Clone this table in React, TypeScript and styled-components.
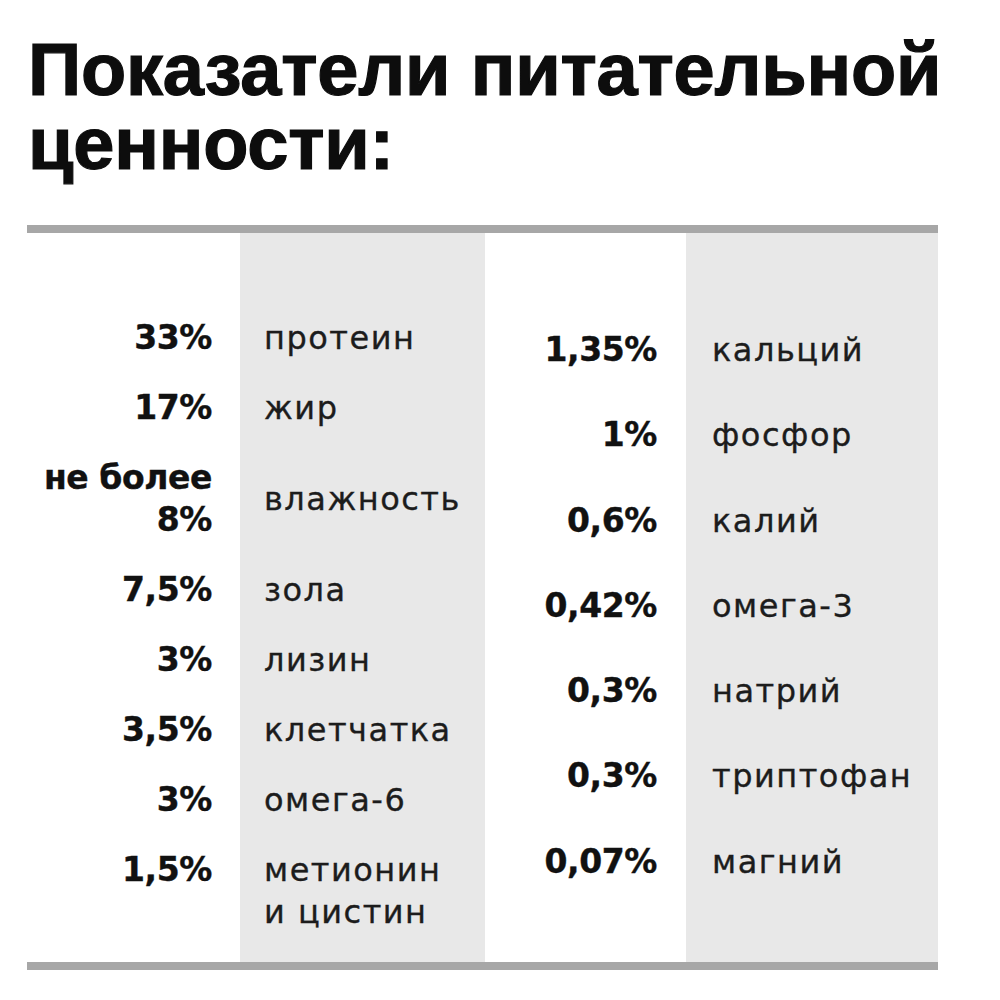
import React from "react";
import styled, { createGlobalStyle } from "styled-components";

const GlobalStyle = createGlobalStyle`
  html, body {
    margin: 0;
    padding: 0;
    background: #ffffff;
  }
`;

const Page = styled.main`
  width: 1000px;
  height: 1000px;
  box-sizing: border-box;
  padding: 33px 0 0 27px;
  background: #ffffff;
`;

const Title = styled.h1`
  margin: 0 0 44px 1px;
  white-space: nowrap;
  font-family: "Liberation Sans", Arial, sans-serif;
  font-weight: 700;
  font-size: 74px;
  line-height: 74px;
  letter-spacing: -0.2px;
  color: #0d0d0d;
  -webkit-text-stroke: 1.2px #0d0d0d;
`;

const Table = styled.section`
  display: flex;
  width: 911px;
  border-top: 8px solid #a7a7a7;
  border-bottom: 8px solid #a7a7a7;
`;

const Half = styled.div<{ $valueW: number; $nameW: number; $padTop: number; $gap: number }>`
  display: grid;
  grid-template-columns: ${(p) => p.$valueW}px ${(p) => p.$nameW}px;
  grid-auto-rows: auto;
  align-content: start;
  row-gap: ${(p) => p.$gap}px;
  padding: ${(p) => p.$padTop}px 0 29px;
  background: linear-gradient(
    to right,
    #ffffff ${(p) => p.$valueW}px,
    #e8e8e8 ${(p) => p.$valueW}px
  );
`;

const Value = styled.div<{ $pad: number }>`
  padding-right: ${(p) => p.$pad}px;
  text-align: right;
  white-space: nowrap;
  font-family: "DejaVu Sans", Verdana, sans-serif;
  font-weight: 700;
  font-size: 33px;
  line-height: 42px;
  letter-spacing: -0.4px;
  color: #111111;
  -webkit-text-stroke: 0.4px #111111;
`;

const Name = styled.div<{ $pad: number; $center?: boolean }>`
  padding-left: ${(p) => p.$pad}px;
  align-self: ${(p) => (p.$center ? "center" : "start")};
  white-space: nowrap;
  font-family: "DejaVu Sans", Verdana, sans-serif;
  font-weight: 400;
  font-size: 32px;
  line-height: 42px;
  letter-spacing: 1.5px;
  color: #1c1c1c;
  -webkit-text-stroke: 0.35px #1c1c1c;
`;

type Row = { value: React.ReactNode; name: React.ReactNode; center?: boolean };

const leftRows: Row[] = [
  { value: "33%", name: "протеин" },
  { value: "17%", name: "жир" },
  {
    value: (
      <>
        не более
        <br />
        8%
      </>
    ),
    name: "влажность",
    center: true,
  },
  { value: "7,5%", name: "зола" },
  { value: "3%", name: "лизин" },
  { value: "3,5%", name: "клетчатка" },
  { value: "3%", name: "омега-6" },
  {
    value: "1,5%",
    name: (
      <>
        метионин
        <br />и цистин
      </>
    ),
  },
];

const rightRows: Row[] = [
  { value: "1,35%", name: "кальций" },
  { value: "1%", name: "фосфор" },
  { value: "0,6%", name: "калий" },
  { value: "0,42%", name: "омега-3" },
  { value: "0,3%", name: "натрий" },
  { value: "0,3%", name: "триптофан" },
  { value: "0,07%", name: "магний" },
];

export default function App() {
  return (
    <>
      <GlobalStyle />
      <Page>
        <Title>
          Показатели питательной
          <br />
          ценности:
        </Title>
        <Table>
          <Half $valueW={213} $nameW={245} $padTop={84} $gap={28}>
            {leftRows.map((r, i) => (
              <React.Fragment key={i}>
                <Value $pad={28}>{r.value}</Value>
                <Name $pad={24} $center={r.center}>
                  {r.name}
                </Name>
              </React.Fragment>
            ))}
          </Half>
          <Half $valueW={201} $nameW={252} $padTop={96} $gap={43.3}>
            {rightRows.map((r, i) => (
              <React.Fragment key={i}>
                <Value $pad={29}>{r.value}</Value>
                <Name $pad={26}>{r.name}</Name>
              </React.Fragment>
            ))}
          </Half>
        </Table>
      </Page>
    </>
  );
}
